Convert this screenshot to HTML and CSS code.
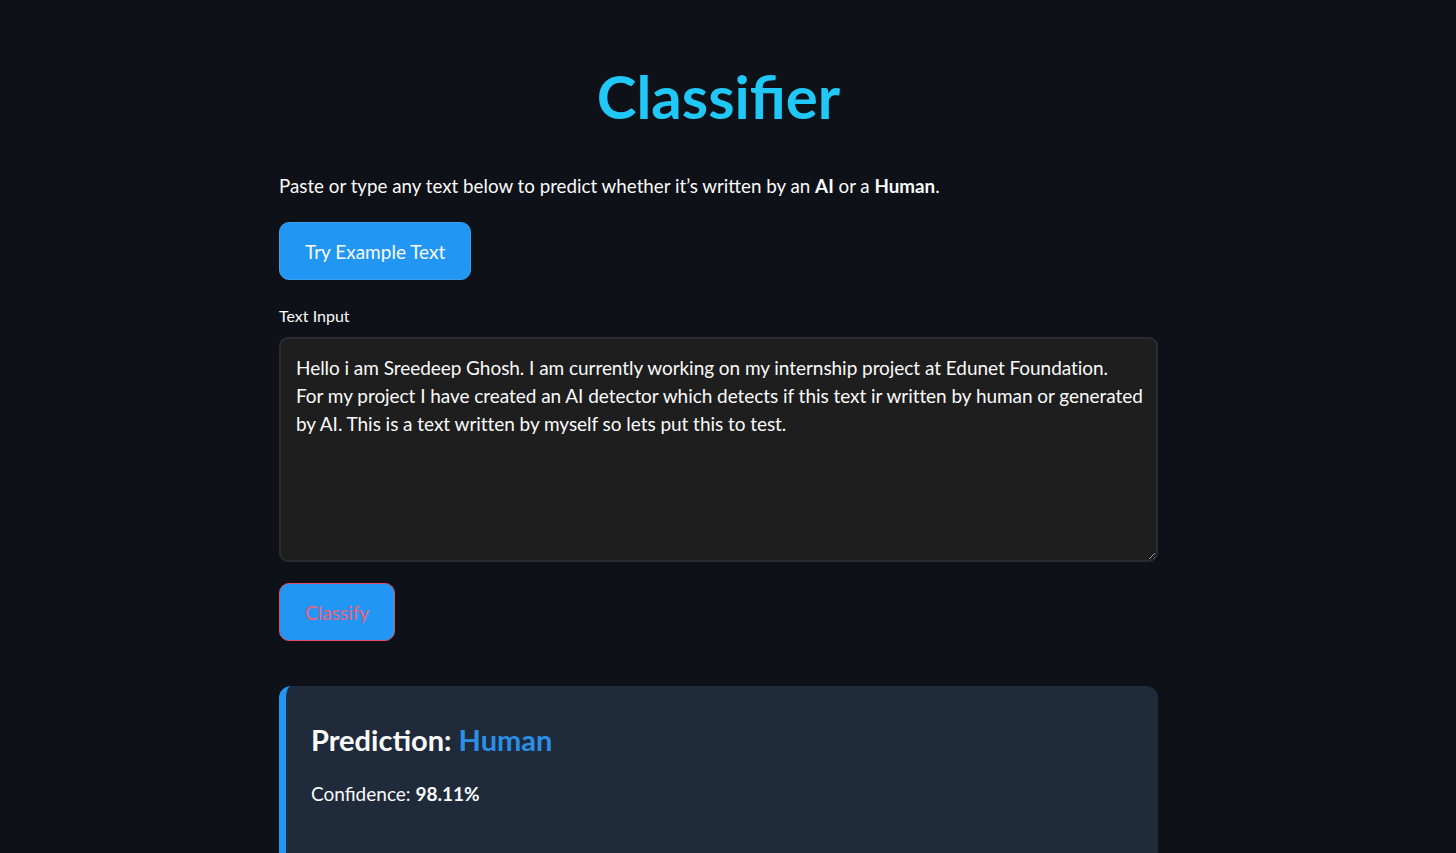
FILE: index.html
```html
<!DOCTYPE html>
<html>
<head>
<meta charset="utf-8">
<link rel="stylesheet" href="styles.css">
</head>
<body>
<main class="page">
  <h1 class="title">Classifier</h1>
  <p class="intro">Paste or type any text below to predict whether it’s written by an <b>AI</b> or a <b>Human</b>.</p>
  <button class="btn">Try Example Text</button>
  <label class="label">Text Input</label>
  <div class="textarea-wrap">
    <textarea class="textarea">Hello i am Sreedeep Ghosh. I am currently working on my internship project at Edunet Foundation.
For my project I have created an AI detector which detects if this text ir written by human or generated by AI. This is a text written by myself so lets put this to test.</textarea>
  </div>
  <button class="btn btn-focus">Classify</button>
  <section class="result">
    <h2 class="pred">Prediction: <span class="human">Human</span></h2>
    <p class="conf">Confidence: <b>98.11%</b></p>
  </section>
</main>
</body>
</html>
```
FILE: styles.css
```css
html, body {
  margin: 0;
  padding: 0;
  background: #0e1117;
  color: #fafafa;
  font-family: Lato, "Open Sans", sans-serif;
  height: 100%;
  overflow: hidden;
}
.page {
  width: 879px;
  margin-left: calc(50% - 449px);
  padding-top: 58px;
  display: flex;
  flex-direction: column;
  align-items: flex-start;
}
.title {
  align-self: stretch;
  text-align: center;
  margin: 0;
  font-size: 60px;
  font-weight: 700;
  color: #1fc8f7;
  line-height: 76px;
}
.intro {
  margin: 38px 0 0;
  font-size: 18.75px;
  line-height: 28px;
}
.intro b { font-weight: 700; }
.btn {
  margin-top: 22px;
  height: 58px;
  padding: 0 25px;
  background: #2196f3;
  color: #fafafa;
  border: 1px solid #3aa0f0;
  border-radius: 10px;
  font-family: inherit;
  font-size: 19px;
}
.label {
  margin-top: 26px;
  font-size: 16px;
  line-height: 20px;
}
.textarea-wrap {
  margin-top: 11px;
  align-self: stretch;
  height: 225px;
  box-sizing: border-box;
  border: 2px solid #2a2c31;
  border-radius: 9px;
  background: #1e1e1e;
  overflow: hidden;
}
.textarea {
  display: block;
  width: 100%;
  height: 100%;
  box-sizing: border-box;
  background: transparent;
  border: none;
  outline: none;
  color: #fafafa;
  font-family: inherit;
  font-size: 19px;
  line-height: 28px;
  padding: 15px 6px 15px 15px;
  letter-spacing: -0.05px;
  resize: vertical;
}
.btn-focus {
  margin-top: 21px;
  color: #f2607c;
  border-color: #e0506a;
}
.result {
  margin-top: 45px;
  align-self: stretch;
  box-sizing: border-box;
  height: 180px;
  background: #1f2a3b;
  border-left: 7px solid #2196f3;
  border-radius: 12px;
  padding: 34px 25px;
}
.pred {
  margin: 0;
  font-size: 29px;
  font-weight: 700;
  line-height: 40px;
}
.human { color: #2b8fe6; }
.conf {
  margin: 20px 0 0;
  font-size: 19px;
  line-height: 28px;
}
```
